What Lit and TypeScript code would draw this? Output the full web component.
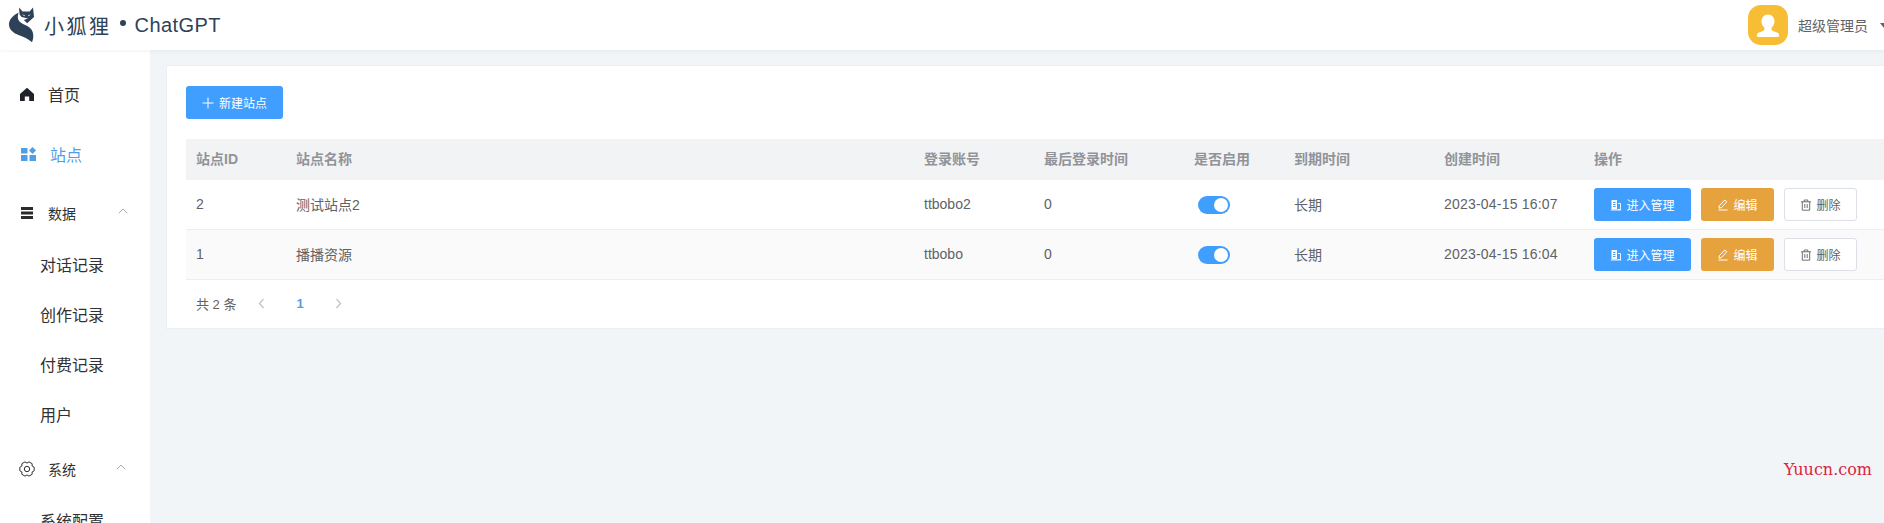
import { LitElement, css, html, svg, unsafeCSS } from "lit";
import { customElement, state } from "lit/decorators.js";

const FONT = `"Liberation Sans", "Noto Sans CJK SC", sans-serif`;

// six lobes, with a flat tip on each one
const gearPath = () => {
  const pt = (r: number, deg: number) => {
    const a = (deg * Math.PI) / 180;
    return `${(8 + r * Math.cos(a)).toFixed(2)} ${(8 + r * Math.sin(a)).toFixed(2)}`;
  };
  const parts: string[] = [];
  for (let i = 0; i < 6; i++) {
    const a = i * 60;
    parts.push(pt(7.4, a - 14), pt(7.4, a + 14), pt(5.9, a + 30));
  }
  return "M" + parts.join("L") + "z";
};

const homeIcon = html`<svg viewBox="0 0 14 14" width="14" height="14"><path fill="#1f2329" d="M7 .8 14 7v7H9.2V9.4H4.8V14H0V7z"/></svg>`;
const gridIcon = html`<svg viewBox="0 0 15 14" width="15" height="14"><g fill="#4f9fe6"><rect x="0" y="1" width="6.500" height="5.500" rx=".6"/><rect x="0" y="8" width="6.500" height="6" rx=".6"/><rect x="8.500" y="8" width="6.500" height="6" rx=".6"/><path d="M11.500 0 15 3.500l-3.500 3.500L8 3.500z"/></g></svg>`;
const dataIcon = html`<svg viewBox="0 0 12 12" width="12" height="12"><g fill="#2b2b2b"><rect y="0" width="12" height="3"/><rect y="4.500" width="12" height="3"/><rect y="9" width="12" height="3"/></g></svg>`;
const gearIcon = html`<svg viewBox="0 0 16 16" width="16" height="16" fill="none" stroke="#333" stroke-width="1" stroke-linejoin="round"><path d=${gearPath()}/><circle cx="8" cy="8" r="2.700"/></svg>`;
const chevronUp = html`<svg class="chev" viewBox="0 0 10 6" width="10" height="6" fill="none" stroke="#a8abb2" stroke-width="1"><path d="M.8 5.200 5 1l4.200 4.200"/></svg>`;

const foxLogo = html`<svg viewBox="8 6 28 40" width="28" height="40">
  <path fill="#2d4258" d="M19 8.500l3.600 4h7L33 8.500l1 9.500-6.800 6.200-3.400-3.200 4.200-1.500-6.400-1.600-2-2.400z"/>
  <path fill="#2d4258" d="M18.600 13.600c-6 3-9.800 7.400-9.600 12.200.2 5 4.400 8.400 10 10.400 4.400 1.600 9.400 3.600 13 7 1.400-3.200 1.800-7.200.6-10.400-1.200-3.200-3.800-5.200-7.400-6.800-2.800-1.200-6-2.800-7-5.400-.8-2.400-.2-5 .4-7z"/>
  <path fill="#fff" d="M22 15.200l3 1.400-.6.6zM31 15.200l-3 1.400.6.6z"/>
</svg>`;

const plusIcon = html`<svg viewBox="0 0 12 12" width="12" height="12" fill="none" stroke="currentColor" stroke-width="1"><path d="M6 .5v11M.5 6h11"/></svg>`;
const docIcon = html`<svg viewBox="0 0 12 12" width="12" height="12" fill="none" stroke="currentColor"><path fill="currentColor" stroke="none" d="M1.500 1h5.500v9.500H1.500z"/><path stroke="#409eff" d="M3 3.500h2.500M3 5.500h2.500M3 7.500h2.500"/><path d="M8 4.500h2.500v6H8M.8 11h10.400" stroke-width=".9"/></svg>`;
const editIcon = html`<svg viewBox="0 0 12 12" width="12" height="12" fill="none" stroke="currentColor" stroke-width="1"><path d="M7.800 1 9.800 2.800 4.400 8.600l-2.400.6.300-2.500zM1.500 11h9"/></svg>`;
const trashIcon = html`<svg viewBox="0 0 12 12" width="12" height="12" fill="none" stroke="currentColor" stroke-width=".9"><path d="M1 2.800h10M4.200 2.800V1h3.600v1.800M2.300 2.800v8.400h7.400V2.800M4.800 5v4M7.200 5v4"/></svg>`;
const chevronH = (d: string) => svg`<svg viewBox="0 0 7 11" width="7" height="11" fill="none" stroke="#c0c4cc" stroke-width="1.300"><path d=${d}/></svg>`;

interface Site {
  id: number;
  name: string;
  account: string;
  lastLogin: string;
  expire: string;
  created: string;
}

const COLUMNS = [
  { title: "站点ID", width: 100 },
  { title: "站点名称", width: 628 },
  { title: "登录账号", width: 120 },
  { title: "最后登录时间", width: 150 },
  { title: "是否启用", width: 100 },
  { title: "到期时间", width: 150 },
  { title: "创建时间", width: 150 },
  { title: "操作", width: 320 },
];

@customElement("app-root")
export class AppRoot extends LitElement {
  @state() sites: Site[] = [
    { id: 2, name: "测试站点2", account: "ttbobo2", lastLogin: "0", expire: "长期", created: "2023-04-15 16:07" },
    { id: 1, name: "播播资源", account: "ttbobo", lastLogin: "0", expire: "长期", created: "2023-04-15 16:04" },
  ];

  render() {
    return html`
      <header class="topbar">
        <div class="brand">
          ${foxLogo}
          <span class="brand-cn">小狐狸</span>
          <span class="brand-dot"></span>
          <span class="brand-en">ChatGPT</span>
        </div>
        <div class="user">
          <span class="avatar">
            <svg viewBox="0 0 40 40" width="40" height="40"><path fill="#fff" d="M20 9.500c3.900 0 6.500 3 6.500 6.800 0 2.800-1.300 5-2.900 6.300v1.600c0 1 .5 1.500 1.500 1.900l4 1.500c1.500.6 2.100 1.700 2.100 2.900 0 .9-.6 1.400-1.500 1.400H10.300c-.9 0-1.500-.5-1.500-1.400 0-1.200.6-2.300 2.100-2.900l4-1.500c1-.4 1.500-.9 1.500-1.900v-1.600c-1.600-1.300-2.900-3.500-2.900-6.300 0-3.800 2.600-6.800 6.500-6.800z"/></svg>
          </span>
          <span class="user-name">超级管理员</span>
          <span class="caret"></span>
        </div>
      </header>
      <div class="body">
        <nav class="sidebar">
          <a class="item">${homeIcon}<span>首页</span></a>
          <a class="item active">${gridIcon}<span>站点</span></a>
          <div class="group-title">${dataIcon}<span>数据</span>${chevronUp}</div>
          ${["对话记录", "创作记录", "付费记录", "用户"].map((s) => html`<a class="sub">${s}</a>`)}
          <div class="group-title system">${gearIcon}<span>系统</span>${chevronUp}</div>
          <a class="sub">系统配置</a>
        </nav>
        <main class="main">
          <section class="card">
            <button class="btn primary new-btn">${plusIcon}<span>新建站点</span></button>
            <table>
              <colgroup>${COLUMNS.map((c) => html`<col style="width:${c.width}px" />`)}</colgroup>
              <thead>
                <tr>${COLUMNS.map((c) => html`<th>${c.title}</th>`)}</tr>
              </thead>
              <tbody>
                ${this.sites.map(
                  (s) => html`
                    <tr>
                      <td>${s.id}</td>
                      <td>${s.name}</td>
                      <td>${s.account}</td>
                      <td>${s.lastLogin}</td>
                      <td><span class="switch"><i></i></span></td>
                      <td>${s.expire}</td>
                      <td class="date">${s.created}</td>
                      <td>
                        <div class="actions">
                          <button class="btn primary enter">${docIcon}<span>进入管理</span></button>
                          <button class="btn warning">${editIcon}<span>编辑</span></button>
                          <button class="btn plain">${trashIcon}<span>删除</span></button>
                        </div>
                      </td>
                    </tr>
                  `
                )}
              </tbody>
            </table>
            <div class="pager">
              <span class="total">共 2 条</span>
              <span class="nav">${chevronH("M5.500 1 1.500 5.500l4 4.500")}</span>
              <span class="page">1</span>
              <span class="nav">${chevronH("M1.500 1l4 4.500-4 4.500")}</span>
            </div>
          </section>
          <div class="watermark">Yuucn.com</div>
        </main>
      </div>
    `;
  }

  static styles = css`
    :host {
      display: block;
      width: 1884px;
      height: 523px;
      overflow: hidden;
      font-family: ${unsafeCSS(FONT)};
      background: #f2f5f8;
      color: #606266;
      font-size: 14px;
    }
    .topbar {
      height: 50px;
      background: #fff;
      display: flex;
      align-items: center;
      justify-content: space-between;
      padding-left: 8px;
      box-shadow: 0 1px 4px rgba(0, 21, 41, 0.06);
      position: relative;
    }
    .brand {
      display: flex;
      align-items: center;
      color: #2d4258;
    }
    .brand-cn {
      font-size: 20px;
      letter-spacing: 2.5px;
      margin-left: 8px;
    }
    .brand-dot {
      width: 6px;
      height: 6px;
      border-radius: 50%;
      background: #2d4258;
      margin: 0 9px 4px 8px;
    }
    .brand-en {
      font-size: 20px;
      letter-spacing: 0.45px;
    }
    .user {
      display: flex;
      align-items: center;
      width: 136px;
      flex: none;
    }
    .avatar {
      width: 40px;
      height: 40px;
      border-radius: 13px;
      background: #f7bd35;
      display: block;
      flex: none;
    }
    .user-name {
      margin-left: 10px;
      color: #606266;
      white-space: nowrap;
    }
    .caret {
      margin-left: 12px;
      border: 4px solid transparent;
      border-top: 5px solid #606266;
      border-bottom: 0;
      flex: none;
    }
    .body {
      display: flex;
      height: 473px;
    }
    .sidebar {
      width: 150px;
      flex: none;
      background: #fff;
      padding-top: 14px;
      overflow: hidden;
      color: #303133;
    }
    .item {
      height: 60px;
      display: flex;
      align-items: center;
      padding-left: 20px;
      gap: 14px;
      font-size: 16px;
    }
    .item.active {
      color: #4f9fe6;
      padding-left: 21px;
    }
    .group-title {
      height: 55px;
      margin: 1px 0 -1px;
      display: flex;
      align-items: center;
      padding-left: 21px;
      gap: 15px;
      font-size: 14px;
    }
    .group-title.system {
      padding-left: 19px;
      gap: 13px;
      margin: 4px 0 0;
      height: 52px;
    }
    .chev {
      margin-left: 27px;
      margin-bottom: 4px;
    }
    .sub {
      display: flex;
      align-items: center;
      height: 50px;
      padding-left: 40px;
      font-size: 16px;
    }
    .main {
      flex: 1;
      min-width: 0;
      padding: 15px 0 0 16px;
      overflow: hidden;
      position: relative;
    }
    .card {
      width: 1760px;
      height: 264px;
      box-sizing: border-box;
      background: #fff;
      border: 1px solid #ebeef5;
      padding: 20px 19px 0;
    }
    .btn {
      height: 33px;
      border: 1px solid transparent;
      border-radius: 3px;
      padding: 0;
      display: inline-flex;
      align-items: center;
      justify-content: center;
      gap: 4px;
      font: inherit;
      font-size: 12px;
      box-sizing: border-box;
    }
    .primary {
      background: #409eff;
      color: #fff;
    }
    .warning {
      background: #e6a23c;
      color: #fff;
      width: 73px;
    }
    .plain {
      background: #fff;
      border-color: #dcdfe6;
      color: #606266;
      width: 73px;
    }
    .new-btn {
      width: 97px;
      display: flex;
      gap: 5px;
    }
    .enter {
      width: 97px;
    }
    table {
      margin-top: 20px;
      border-collapse: collapse;
      table-layout: fixed;
      width: 1718px;
    }
    th {
      height: 37px;
      padding: 0 10px 4px;
      text-align: left;
      background: #f2f3f5;
      color: #909399;
      font-weight: 700;
    }
    td {
      height: 47px;
      padding: 0 10px 2px;
      border-bottom: 1px solid #ebeef5;
    }
    td.date {
      letter-spacing: 0.2px;
    }
    tbody tr:nth-child(2) td {
      background: #fafafa;
    }
    .switch {
      display: block;
      width: 32px;
      height: 18px;
      margin: 3px 0 0 4px;
      border-radius: 9px;
      background: #409eff;
      position: relative;
    }
    .switch i {
      position: absolute;
      top: 2px;
      right: 2px;
      width: 14px;
      height: 14px;
      border-radius: 50%;
      background: #fff;
    }
    .actions {
      display: flex;
      gap: 10px;
      margin-top: 2px;
    }
    .pager {
      display: flex;
      align-items: center;
      height: 46px;
      padding: 0 0 2px 10px;
      font-size: 13px;
    }
    .total {
      width: 62px;
    }
    .nav {
      display: flex;
      width: 7px;
    }
    .page {
      width: 70px;
      text-align: center;
      color: #4f9fe6;
      font-weight: 700;
    }
    .watermark {
      position: absolute;
      top: 410px;
      right: 12px;
      font-family: "DejaVu Serif", serif;
      font-size: 16px;
      color: #d9263f;
    }
  `;
}
